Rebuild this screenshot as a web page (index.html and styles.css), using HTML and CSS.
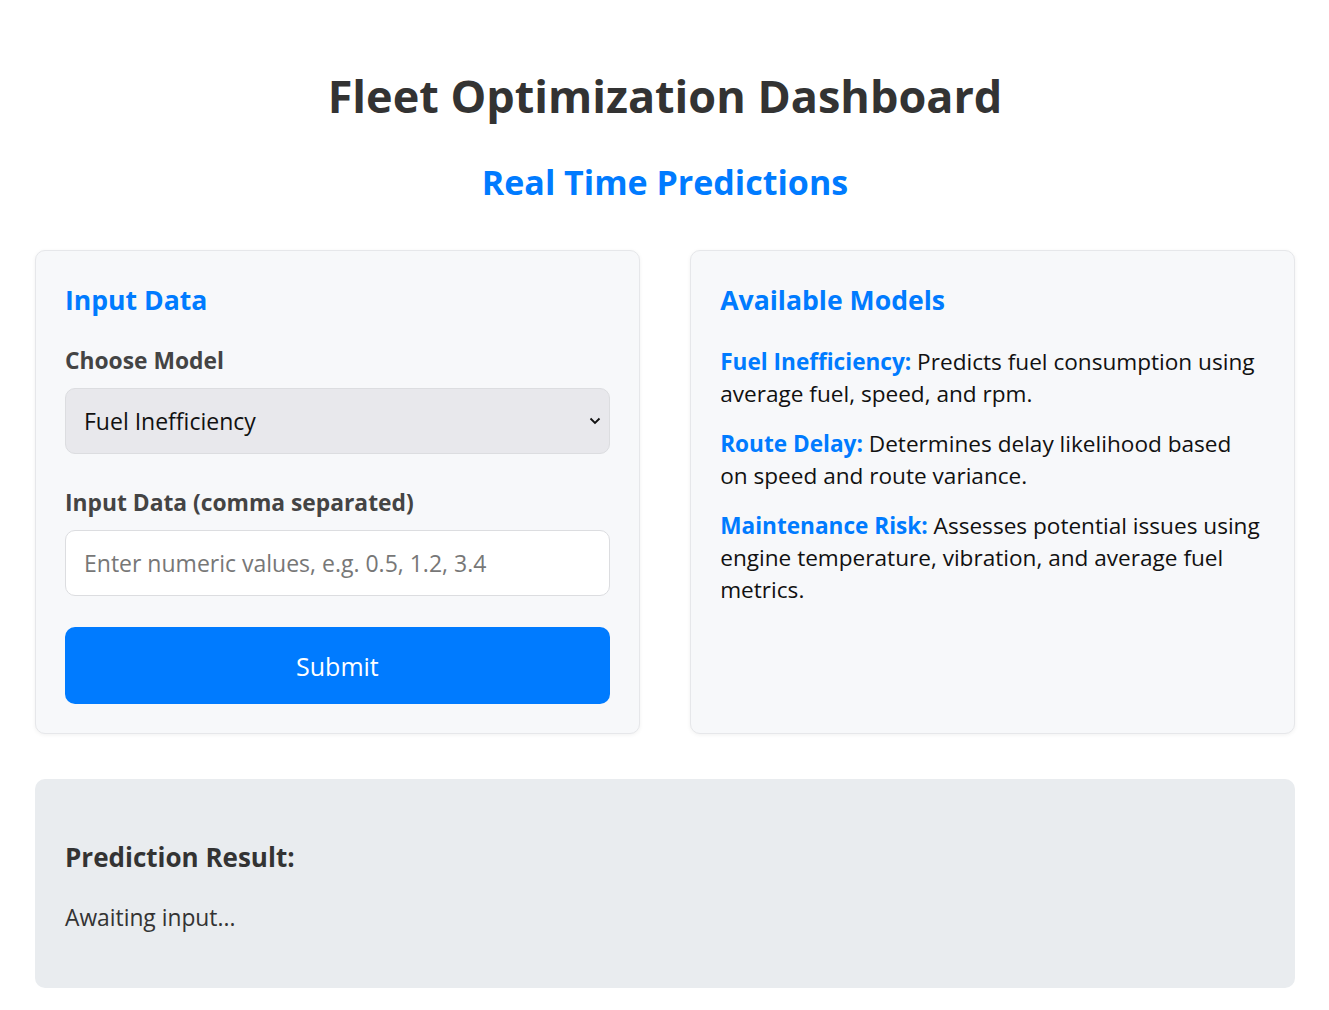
FILE: index.html
```html
<!DOCTYPE html>
<html lang="en">
<head>
<meta charset="utf-8">
<title>Fleet Optimization Dashboard</title>
<link rel="stylesheet" href="styles.css">
</head>
<body>
<div class="container">
  <h1 class="title">Fleet Optimization Dashboard</h1>
  <h2 class="subtitle">Real Time Predictions</h2>
  <div class="cards">
    <section class="card">
      <h3 class="card-title">Input Data</h3>
      <label class="label" for="model">Choose Model</label>
      <div class="select-wrap">
        <select id="model" class="field select">
          <option>Fuel Inefficiency</option>
          <option>Route Delay</option>
          <option>Maintenance Risk</option>
        </select>
        <svg class="chev" width="12" height="8" viewBox="0 0 12 8"><path d="M1.5 1.5 L6 6 L10.5 1.5" fill="none" stroke="#111" stroke-width="1.8"/></svg>
      </div>
      <label class="label" for="data">Input Data (comma separated)</label>
      <input id="data" class="field input" type="text" placeholder="Enter numeric values, e.g. 0.5, 1.2, 3.4">
      <button class="btn">Submit</button>
    </section>
    <section class="card">
      <h3 class="card-title">Available Models</h3>
      <p class="model"><strong>Fuel Inefficiency:</strong> Predicts fuel consumption using average fuel, speed, and rpm.</p>
      <p class="model"><strong>Route Delay:</strong> Determines delay likelihood based on speed and route variance.</p>
      <p class="model"><strong>Maintenance Risk:</strong> Assesses potential issues using engine temperature, vibration, and average fuel metrics.</p>
    </section>
  </div>
  <section class="result">
    <h3 class="result-title">Prediction Result:</h3>
    <p class="result-text">Awaiting input...</p>
  </section>
</div>
</body>
</html>
```
FILE: styles.css
```css
* { box-sizing: border-box; }
body {
  margin: 0;
  background: #fff;
  font-family: "Open Sans", "Noto Sans", sans-serif;
  color: #222;
}
.container {
  padding: 0 34px 0 35px;
}
.title {
  margin: 68px 0 0;
  text-align: center;
  font-size: 45px;
  line-height: 56px;
  font-weight: 700;
  color: #333;
}
.subtitle {
  margin: 36px 0 0;
  text-align: center;
  font-size: 34px;
  line-height: 44px;
  font-weight: 700;
  color: #007bff;
}
.cards {
  display: flex;
  justify-content: space-between;
  margin-top: 46px;
}
.card {
  width: 48%;
  background: #f7f8fa;
  border: 1px solid #e6e7ea;
  border-radius: 10px;
  box-shadow: 0 1px 4px rgba(0,0,0,0.06);
  padding: 29px 29px 29px;
  display: flex;
  flex-direction: column;
}
.card-title {
  margin: 0 0 26px;
  font-size: 26.6px;
  line-height: 40px;
  color: #007bff;
  font-weight: 700;
}
.label {
  font-size: 22.8px;
  line-height: 30px;
  font-weight: 700;
  color: #444;
  margin-bottom: 12px;
}
.select-wrap { position: relative; margin-bottom: 34px; }
.field {
  width: 100%;
  height: 66px;
  border-radius: 10px;
  border: 1px solid #dcdde0;
  font-family: inherit;
  font-size: 23px;
  padding: 0 18px;
  color: #111;
  margin: 0;
}
.select {
  appearance: none;
  -webkit-appearance: none;
  background: #e8e8ec;
}
.chev {
  position: absolute;
  right: 9px;
  top: 29px;
}
.input {
  background: #fff;
  margin-bottom: 31px;
}
.input::placeholder { color: #777; }
.btn {
  height: 77px;
  border: none;
  border-radius: 10px;
  background: #007bff;
  color: #fff;
  font-family: inherit;
  font-size: 25px;
  cursor: pointer;
}
.model {
  margin: 0 0 18px;
  max-width: 541px;
  font-size: 22.6px;
  line-height: 32px;
  color: #111;
}
.model strong { color: #007bff; }
.result {
  margin-top: 45px;
  background: #e9ecef;
  border-radius: 10px;
  padding: 58px 30px 55px;
}
.result-title {
  margin: 0 0 26px;
  font-size: 26px;
  line-height: 40px;
  color: #333;
}
.result-text {
  margin: 0;
  font-size: 22.8px;
  line-height: 30px;
  color: #333;
}
```
